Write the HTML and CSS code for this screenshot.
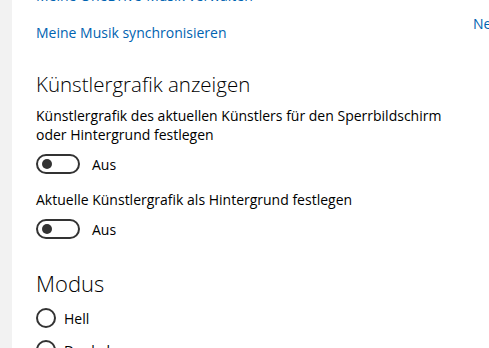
FILE: index.html
```html
<!DOCTYPE html>
<html>
<head>
<title>Musik Einstellungen</title>
<link rel="stylesheet" href="styles.css">
</head>
<body>

<div class="page">
  <div class="rail"></div>
  <div class="main">
    <a class="link top">Meine OneDrive-Musik verwalten</a>
    <a class="link">Meine Musik synchronisieren</a>

    <h2>Künstlergrafik anzeigen</h2>
    <p class="label">Künstlergrafik des aktuellen Künstlers für den Sperrbildschirm oder Hintergrund festlegen</p>
    <div class="toggle"><span class="switch"><span class="knob"></span></span>Aus</div>

    <p class="label">Aktuelle Künstlergrafik als Hintergrund festlegen</p>
    <div class="toggle"><span class="switch"><span class="knob"></span></span>Aus</div>

    <h2 class="mode">Modus</h2>
    <div class="radio"><span class="circle"></span>Hell</div>
    <div class="radio"><span class="circle"></span>Dunkel</div>
  </div>
  <div class="side">
    <a class="link">Neuigkeiten</a>
  </div>
</div>

</body>
</html>
```

FILE: styles.css
```css
body { margin: 0; background: #fff; color: #000; font-family: "Open Sans", sans-serif; font-size: 14px; overflow: hidden; }
.page { display: flex; height: 348px; }
.rail { width: 12px; background: #f2f2f2; flex: none; }
.main { width: 437px; padding-left: 24px; flex: none; margin-top: -14px; }
.side { padding-top: 14px; white-space: nowrap; }
.link { display: block; color: #0063b1; line-height: 20px; }
.link.top { margin-bottom: 17px; }
h2 { font-weight: 300; font-size: 20.5px; margin: 27px 0 8px; line-height: 28px; }
.label { margin: 0; line-height: 19px; }
.toggle { display: flex; align-items: center; gap: 12px; height: 20px; margin: 10px 0 16px; }
.switch { width: 40px; height: 16px; border: 2px solid #333; border-radius: 10px; position: relative; }
.knob { position: absolute; left: 4px; top: 3px; width: 10px; height: 10px; border-radius: 50%; background: #333; }
h2.mode { font-size: 22px; margin: 30px 0 11px; }
.radio { display: flex; align-items: center; gap: 8px; height: 20px; margin-bottom: 12px; }
.circle { width: 16px; height: 16px; border: 2px solid #333; border-radius: 50%; }
```
